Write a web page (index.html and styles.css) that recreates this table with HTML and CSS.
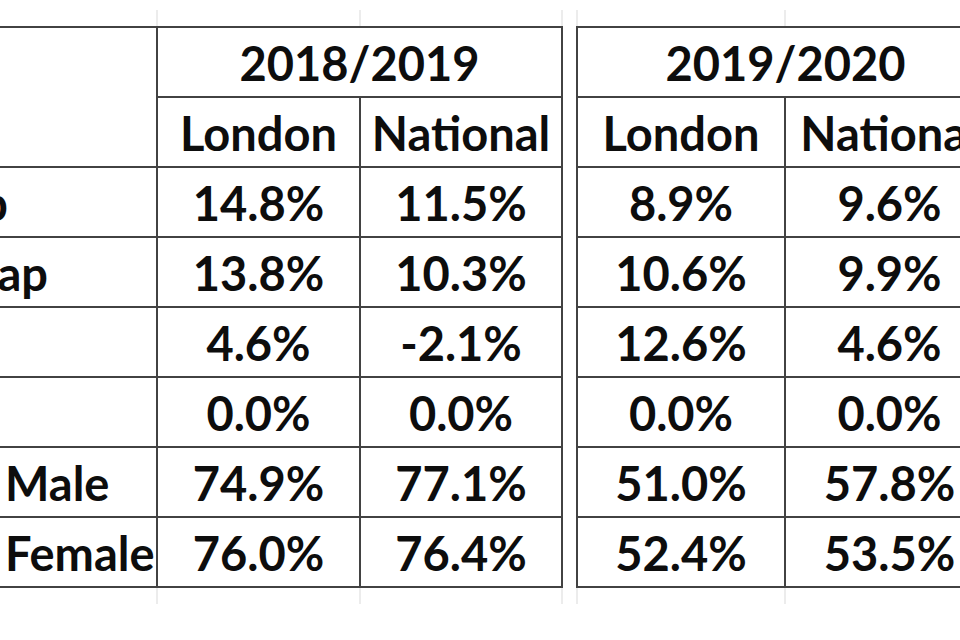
FILE: index.html
```html
<!DOCTYPE html>
<html lang="en">
<head>
<meta charset="utf-8">
<title>Pay gap and employment rates</title>
<link rel="stylesheet" href="styles.css">
</head>
<body>
<div class="sheet">
  <section class="block block-a">
    <div class="ghost"><span></span><span></span><span></span></div>
    <div class="grid">
      <div class="cell lbl lbl-head"></div>
      <div class="cell year">2018/2019</div>
      <div class="cell">London</div>
      <div class="cell">National</div>

      <div class="cell lbl lbl-end end-8"><span>Mean Gender Pay Gap</span></div>
      <div class="cell">14.8%</div>
      <div class="cell">11.5%</div>

      <div class="cell lbl lbl-end end-48"><span>Median Gender Pay Gap</span></div>
      <div class="cell">13.8%</div>
      <div class="cell">10.3%</div>

      <div class="cell lbl"></div>
      <div class="cell">4.6%</div>
      <div class="cell">-2.1%</div>

      <div class="cell lbl"></div>
      <div class="cell">0.0%</div>
      <div class="cell">0.0%</div>

      <div class="cell lbl lbl-start">Male</div>
      <div class="cell">74.9%</div>
      <div class="cell">77.1%</div>

      <div class="cell lbl lbl-start">Female</div>
      <div class="cell">76.0%</div>
      <div class="cell">76.4%</div>
    </div>
    <div class="ghost"><span></span><span></span><span></span></div>
  </section>

  <section class="block block-b">
    <div class="ghost"><span></span><span></span></div>
    <div class="grid">
      <div class="cell year">2019/2020</div>
      <div class="cell">London</div>
      <div class="cell">National</div>

      <div class="cell">8.9%</div>
      <div class="cell">9.6%</div>

      <div class="cell">10.6%</div>
      <div class="cell">9.9%</div>

      <div class="cell">12.6%</div>
      <div class="cell">4.6%</div>

      <div class="cell">0.0%</div>
      <div class="cell">0.0%</div>

      <div class="cell">51.0%</div>
      <div class="cell">57.8%</div>

      <div class="cell">52.4%</div>
      <div class="cell">53.5%</div>
    </div>
    <div class="ghost"><span></span><span></span></div>
  </section>
</div>
</body>
</html>
```

FILE: styles.css
```css
html, body {
  margin: 0;
  padding: 0;
  background: #ffffff;
}

body {
  width: 960px;
  height: 640px;
  overflow: hidden;
  font-family: "Lato", "Liberation Sans", sans-serif;
  color: #0d0d0d;
}

.sheet {
  display: flex;
  gap: 13px;
  padding-top: 10px;
}

.block {
  flex-shrink: 0;
  display: flex;
  flex-direction: column;
}

.block-a {
  margin-left: -44px;
}

.grid,
.ghost {
  display: grid;
  gap: 2px;
  padding: 0 2px;
}

.block-a .grid,
.block-a .ghost {
  grid-template-columns: 198px 201px 200px;
}

.block-b .grid,
.block-b .ghost {
  grid-template-columns: 206px 207px;
}

.grid {
  grid-template-rows: repeat(8, 68px);
  padding: 2px;
  background: #424242;
}

.ghost {
  height: 16px;
  background: #ececec;
}

.ghost span {
  background: #ffffff;
}

.cell {
  background: #ffffff;
  display: flex;
  align-items: center;
  justify-content: center;
  padding-top: 3px;
  font-size: 47px;
  font-weight: 700;
  white-space: nowrap;
  line-height: 1.2;
  min-width: 0;
  overflow: hidden;
}

.year {
  grid-column: span 2;
}

.lbl-head {
  grid-row: span 2;
}

.lbl-start {
  justify-content: flex-start;
  padding-left: 47px;
}

.lbl-end {
  justify-content: flex-end;
}

.end-8 {
  padding-right: 148px;
}

.end-48 {
  padding-right: 108px;
}
```
